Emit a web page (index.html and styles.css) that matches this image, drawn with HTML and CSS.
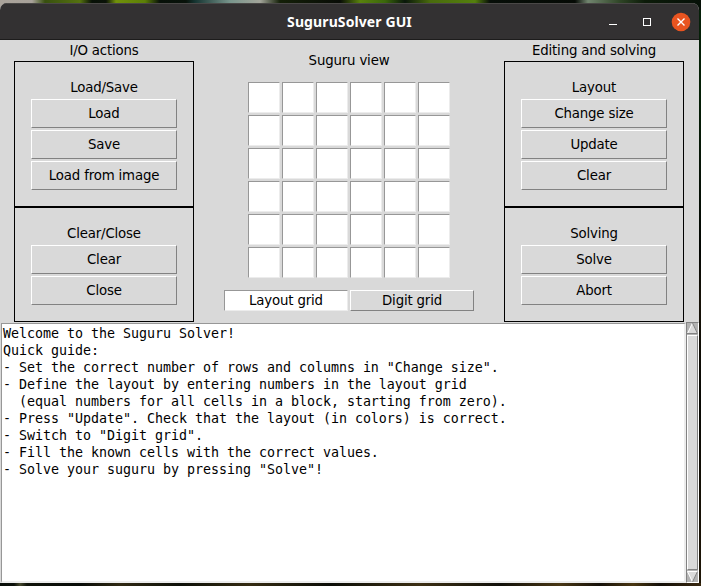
FILE: index.html
```html
<!DOCTYPE html>
<html lang="en">
<head>
<meta charset="utf-8">
<title>SuguruSolver GUI</title>
<link rel="stylesheet" href="styles.css">
</head>
<body>
<main class="window">
  <header class="titlebar">
    <h1 class="title">SuguruSolver GUI</h1>
    <svg class="controls" width="90" height="22" viewBox="0 0 90 22">
      <path d="M5 13.5h8" stroke="#fff" fill="none"/>
      <rect x="39.5" y="7.5" width="7" height="7" stroke="#fff" fill="none"/>
      <circle cx="77" cy="11" r="9.3" fill="#e95420"/>
      <path d="M73.5 7.5l7 7M80.5 7.5l-7 7" stroke="#fff" stroke-width="1.4" fill="none"/>
    </svg>
  </header>
  <div class="content">
    <section class="side">
      <h2 class="heading">I/O actions</h2>
      <div class="group">
        <h3 class="label">Load/Save</h3>
        <button class="btn">Load</button>
        <button class="btn">Save</button>
        <button class="btn">Load from image</button>
      </div>
      <div class="group group-short">
        <h3 class="label">Clear/Close</h3>
        <button class="btn">Clear</button>
        <button class="btn">Close</button>
      </div>
    </section>
    <section class="view">
      <h2 class="heading">Suguru view</h2>
      <div class="grid">
        <i></i><i></i><i></i><i></i><i></i><i></i>
        <i></i><i></i><i></i><i></i><i></i><i></i>
        <i></i><i></i><i></i><i></i><i></i><i></i>
        <i></i><i></i><i></i><i></i><i></i><i></i>
        <i></i><i></i><i></i><i></i><i></i><i></i>
        <i></i><i></i><i></i><i></i><i></i><i></i>
      </div>
      <div class="tabs">
        <button class="btn tab tab-active">Layout grid</button>
        <button class="btn tab">Digit grid</button>
      </div>
    </section>
    <section class="side">
      <h2 class="heading">Editing and solving</h2>
      <div class="group">
        <h3 class="label">Layout</h3>
        <button class="btn">Change size</button>
        <button class="btn">Update</button>
        <button class="btn">Clear</button>
      </div>
      <div class="group group-short">
        <h3 class="label">Solving</h3>
        <button class="btn">Solve</button>
        <button class="btn">Abort</button>
      </div>
    </section>
  </div>
  <div class="console">
    <pre class="log">Welcome to the Suguru Solver!
Quick guide:
- Set the correct number of rows and columns in "Change size".
- Define the layout by entering numbers in the layout grid
  (equal numbers for all cells in a block, starting from zero).
- Press "Update". Check that the layout (in colors) is correct.
- Switch to "Digit grid".
- Fill the known cells with the correct values.
- Solve your suguru by pressing "Solve"!</pre>
    <div class="scrollbar">
      <svg class="arrow" width="11" height="11" viewBox="0 0 11 11">
        <path d="M5.5 0L11 11H0z" fill="#d9d9d9"/>
        <path d="M5.5 0L.5 10.5" stroke="#fff" fill="none"/>
        <path d="M5.5 0l5 10.5H0" stroke="#828282" fill="none"/>
      </svg>
      <div class="thumb"></div>
      <svg class="arrow" width="11" height="11" viewBox="0 0 11 11">
        <path d="M0 0h11L5.5 11z" fill="#d9d9d9"/>
        <path d="M5.5 11L.5.5H11" stroke="#fff" fill="none"/>
        <path d="M10.5.5l-5 10.5" stroke="#828282" fill="none"/>
      </svg>
    </div>
  </div>
</main>
</body>
</html>
```
FILE: styles.css
```css
* { box-sizing: border-box; }

body {
  margin: 0;
  width: 701px;
  height: 586px;
  overflow: hidden;
  padding-top: 3px;
  font: 13.333px/17px "DejaVu Sans", sans-serif;
  letter-spacing: -0.17px;
  color: #000;
  background:
    linear-gradient(90deg, #aaa39b 0, #a8a29a 32px, #38500f 45px, #55720f 80px, #071006 92px, #0a1208 106px, #71910a 116px, #5c8007 145px, #071008 160px, #08120a 186px, #153431 195px, #78958c 230px, #a3a59a 260px, #142008 280px, #080c06 340px, #59820d 360px, #3b680b 385px, #09170a 405px, #496b0d 430px, #54800d 475px, #070e08 490px, #050a05 575px, #71856f 588px, #2f4526 620px, #0c1b09 645px, #061008 701px) 0 0 / 701px 10px no-repeat,
    linear-gradient(90deg, #080d08 0, #0b100a 14px, #46482e 20px, #10130a 27px, #070b07 80px, #302913 120px, #0d1008 180px, #352b12 250px, #0b0d07 330px, #3d3014 420px, #11100a 500px, #493715 560px, #151009 600px, #4a3712 633px, #130e07 660px, #39280f 701px) 0 583px / 701px 3px no-repeat,
    linear-gradient(#06200a, #052006 90px, #071407 170px, #030602 250px, #171208 300px, #080803 400px, #201708 586px);
}

h1, h2, h3, pre { margin: 0; font-size: inherit; font-weight: normal; }

.window {
  width: 699px;
  height: 580px;
  border-radius: 7px 7px 0 0;
  overflow: hidden;
  background: #d9d9d9;
}

.titlebar {
  display: grid;
  grid-template-columns: 90px 1fr 90px;
  align-items: center;
  height: 37px;
  padding-right: 5px;
  background: #333132;
  border-top: 1px solid #4a4847;
  border-bottom: 1px solid #1d1c1c;
}

.title {
  grid-column: 2;
  padding-left: 5px;
  text-align: center;
  font: bold 14px/20px "Noto Sans", sans-serif;
  letter-spacing: 0.1px;
  color: #fff;
}

.controls { display: block; }

.content {
  display: grid;
  grid-template-columns: 180px 310px 180px;
  height: 282px;
  padding-left: 14px;
}

.heading { height: 21px; line-height: 22px; text-align: center; }

.group {
  display: flex;
  flex-direction: column;
  gap: 2px;
  height: 146px;
  padding: 16px 16px 0;
  border: 1px solid #000;
}

.group-short { height: 115px; }

.label { height: 19px; line-height: 20px; text-align: center; }

.btn {
  height: 29px;
  padding: 0 0 1px;
  border: 1px solid;
  border-color: #fff #828282 #828282 #fff;
  border-radius: 0;
  background: #d9d9d9;
  color: #000;
  font: inherit;
  letter-spacing: inherit;
}

.view {
  display: flex;
  flex-direction: column;
  align-items: center;
  padding-top: 10px;
}

.grid {
  display: grid;
  grid-template-columns: repeat(6, 32px);
  grid-auto-rows: 31px;
  gap: 2px;
  margin-top: 11px;
}

.grid i {
  border: 1px solid;
  border-color: #979797 #ececec #ececec #979797;
  background: #fff;
}

.tabs { display: flex; gap: 2px; margin-top: 12px; }

.tab { width: 124px; height: 21px; }

.tab-active { border-color: #979797 #ececec #ececec #979797; background: #fff; }

.console { display: flex; height: 261px; }

.log {
  width: 685px;
  margin: 1px 0 0 1px;
  padding: 1px 1px 0;
  border: solid;
  border-width: 1px 2px 2px 1px;
  border-color: #979797 #ececec #ececec #979797;
  background: #fff;
  font: 13.333px/17px "DejaVu Sans Mono", monospace;
  letter-spacing: -0.027px;
}

.scrollbar {
  display: flex;
  flex-direction: column;
  align-items: center;
  width: 13px;
  height: 261px;
  border: 1px solid;
  border-color: #828282 #fff #fff #828282;
  background: #b3b3b3;
}

.arrow { display: block; flex: none; }

.thumb {
  flex: 1;
  width: 11px;
  margin: 1px 0;
  border: 1px solid;
  border-color: #fff #828282 #828282 #fff;
  background: #d9d9d9;
}
```
